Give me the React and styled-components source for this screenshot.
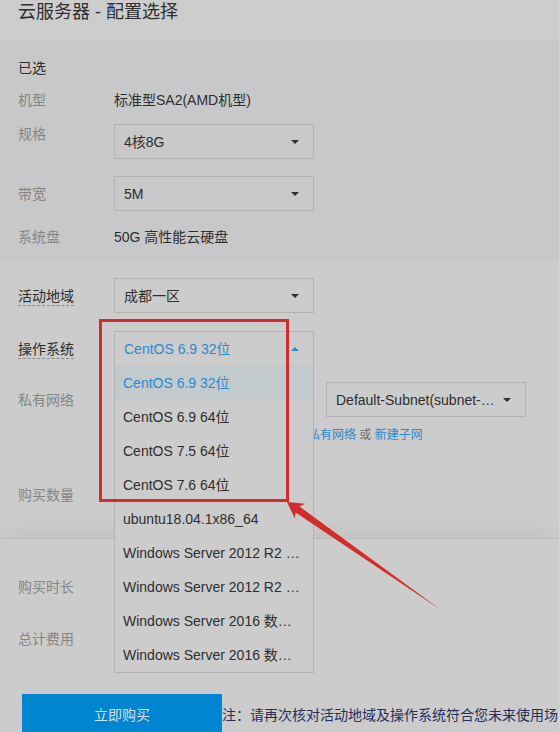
import React from "react";
import styled, { createGlobalStyle } from "styled-components";

const GlobalStyle = createGlobalStyle`
  html, body {
    margin: 0;
    padding: 0;
    background: #cccccc;
    overflow: hidden;
  }
  body {
    font-family: "Liberation Sans", Arial, "Noto Sans CJK SC", sans-serif;
    font-size: 14px;
    color: #2e2e2e;
  }
`;

const osList = [
  "CentOS 6.9 32位",
  "CentOS 6.9 64位",
  "CentOS 7.5 64位",
  "CentOS 7.6 64位",
  "ubuntu18.04.1x86_64",
  "Windows Server 2012 R2 …",
  "Windows Server 2012 R2 …",
  "Windows Server 2016 数…",
  "Windows Server 2016 数…",
];

const Page = styled.div`
  position: relative;
  width: 559px;
  height: 732px;
  overflow: hidden;
`;

const Header = styled.div`
  height: 40px;
  padding: 0 18px;
  background: #cdcdcd;
  font-size: 18px;
  line-height: 24px;
  color: #2f2f2f;
`;

const Card = styled.div`
  background: #c8c8ca;
  padding: 18px 18px 15px;
`;

const Section = styled.div`
  padding: 16px 18px 26px;
`;

const Footer = styled.div`
  border-top: 1px solid #bdbdbd;
  box-shadow: 0 -12px 18px -6px rgba(0, 0, 0, 0.05);
  padding: 38px 18px 0;
`;

const Row = styled.div`
  display: flex;
  align-items: ${(p) => (p.top ? "flex-start" : "center")};
  min-height: ${(p) => p.h || 20}px;
  margin-top: ${(p) => p.mt || 0}px;
  line-height: 20px;
`;

const Label = styled.div`
  width: 96px;
  flex: none;
  color: ${(p) => (p.dark ? "#2e2e2e" : "#858585")};
`;

const Dashed = styled.span`
  color: #2e2e2e;
  border-bottom: 1px dashed #8c8c8c;
  padding-bottom: 1px;
`;

const Value = styled.div`
  color: #2e2e2e;
`;

const SelectWrap = styled.div`
  position: relative;
  width: 200px;
  margin-left: ${(p) => p.ml || 0}px;
  z-index: ${(p) => (p.open ? 5 : 1)};
`;

const SelectBox = styled.div`
  box-sizing: border-box;
  height: 35px;
  display: flex;
  align-items: center;
  justify-content: space-between;
  padding: 0 14px 0 9px;
  border: 1px solid #b3b3b3;
  border-bottom-color: ${(p) => (p.open ? "#c4c4c4" : "#b3b3b3")};
  color: ${(p) => (p.open ? "#2b89d0" : "#2e2e2e")};
  white-space: nowrap;
`;

const Caret = styled.span`
  width: 0;
  height: 0;
  border-left: 4px solid transparent;
  border-right: 4px solid transparent;
  ${(p) =>
    p.up
      ? "border-bottom: 4px solid #2b89d0;"
      : "border-top: 4px solid #2e2e2e;"}
`;

const Menu = styled.ul`
  position: absolute;
  top: 100%;
  left: 0;
  width: 200px;
  box-sizing: border-box;
  margin: 0;
  padding: 0;
  list-style: none;
  background: #cccccc;
  border: 1px solid #b3b3b3;
  border-top: none;
`;

const Option = styled.li`
  height: 34px;
  line-height: 34px;
  padding-left: 8px;
  white-space: nowrap;
  color: ${(p) => (p.active ? "#2b89d0" : "#2e2e2e")};
  background: ${(p) => (p.active ? "#c3cacd" : "transparent")};
`;

const Hint = styled.div`
  margin: 10px 0 0 110px;
  font-size: 12px;
  line-height: 16px;
  color: #6e6e6e;
  white-space: nowrap;
`;

const Link = styled.span`
  color: #2b89d0;
`;

const BuyRow = styled.div`
  display: flex;
  align-items: center;
  margin: 45px 0 0 4px;
  white-space: nowrap;
`;

const BuyButton = styled.button`
  width: 200px;
  height: 40px;
  flex: none;
  border: none;
  background: #0086d1;
  color: #d6dde4;
  font-family: inherit;
  font-size: 14px;
`;

const Note = styled.span`
  color: #262e5c;
  font-size: 14px;
`;

const Annotation = styled.svg`
  position: absolute;
  left: 0;
  top: 0;
  pointer-events: none;
  z-index: 10;
`;

function Select({ value, open, ml }) {
  return (
    <SelectWrap open={open} ml={ml}>
      <SelectBox open={open}>
        <span>{value}</span>
        <Caret up={open} />
      </SelectBox>
      {open && (
        <Menu>
          {osList.map((os, i) => (
            <Option key={i} active={i === 0}>
              {os}
            </Option>
          ))}
        </Menu>
      )}
    </SelectWrap>
  );
}

export default function App() {
  return (
    <Page>
      <GlobalStyle />
      <Header>云服务器 - 配置选择</Header>
      <Card>
        <Row>
          <Label dark>已选</Label>
        </Row>
        <Row mt={12}>
          <Label>机型</Label>
          <Value>标准型SA2(AMD机型)</Value>
        </Row>
        <Row mt={14} h={35} top>
          <Label>规格</Label>
          <Select value="4核8G" />
        </Row>
        <Row mt={17} h={35}>
          <Label>带宽</Label>
          <Select value="5M" />
        </Row>
        <Row mt={16}>
          <Label>系统盘</Label>
          <Value>50G 高性能云硬盘</Value>
        </Row>
      </Card>
      <Section>
        <Row h={35}>
          <Label>
            <Dashed>活动地域</Dashed>
          </Label>
          <Select value="成都一区" />
        </Row>
        <Row mt={18} h={35}>
          <Label>
            <Dashed>操作系统</Dashed>
          </Label>
          <Select value="CentOS 6.9 32位" open />
        </Row>
        <Row mt={16} h={35}>
          <Label>私有网络</Label>
          <Select value="Default-Vpc" />
          <Select value="Default-Subnet(subnet-…" ml={12} />
        </Row>
        <Hint>
          如现有网络不合适，您可去控制台<Link>私有网络</Link> 或 <Link>新建子网</Link>
        </Hint>
        <Row mt={34} h={35}>
          <Label>购买数量</Label>
        </Row>
      </Section>
      <Footer>
        <Row>
          <Label>购买时长</Label>
        </Row>
        <Row mt={32}>
          <Label>总计费用</Label>
        </Row>
        <BuyRow>
          <BuyButton>立即购买</BuyButton>
          <Note>注：请再次核对活动地域及操作系统符合您未来使用场</Note>
        </BuyRow>
      </Footer>
      <Annotation width="559" height="732" viewBox="0 0 559 732">
        <rect x="100.5" y="320.5" width="187" height="180" fill="none" stroke="#d42c2c" strokeWidth="3" />
        <polygon
          points="287,502 305.3,503.8 299.6,506.6 441,610 295.6,512.4 294.9,518.6"
          fill="#d42c2c"
        />
      </Annotation>
    </Page>
  );
}
